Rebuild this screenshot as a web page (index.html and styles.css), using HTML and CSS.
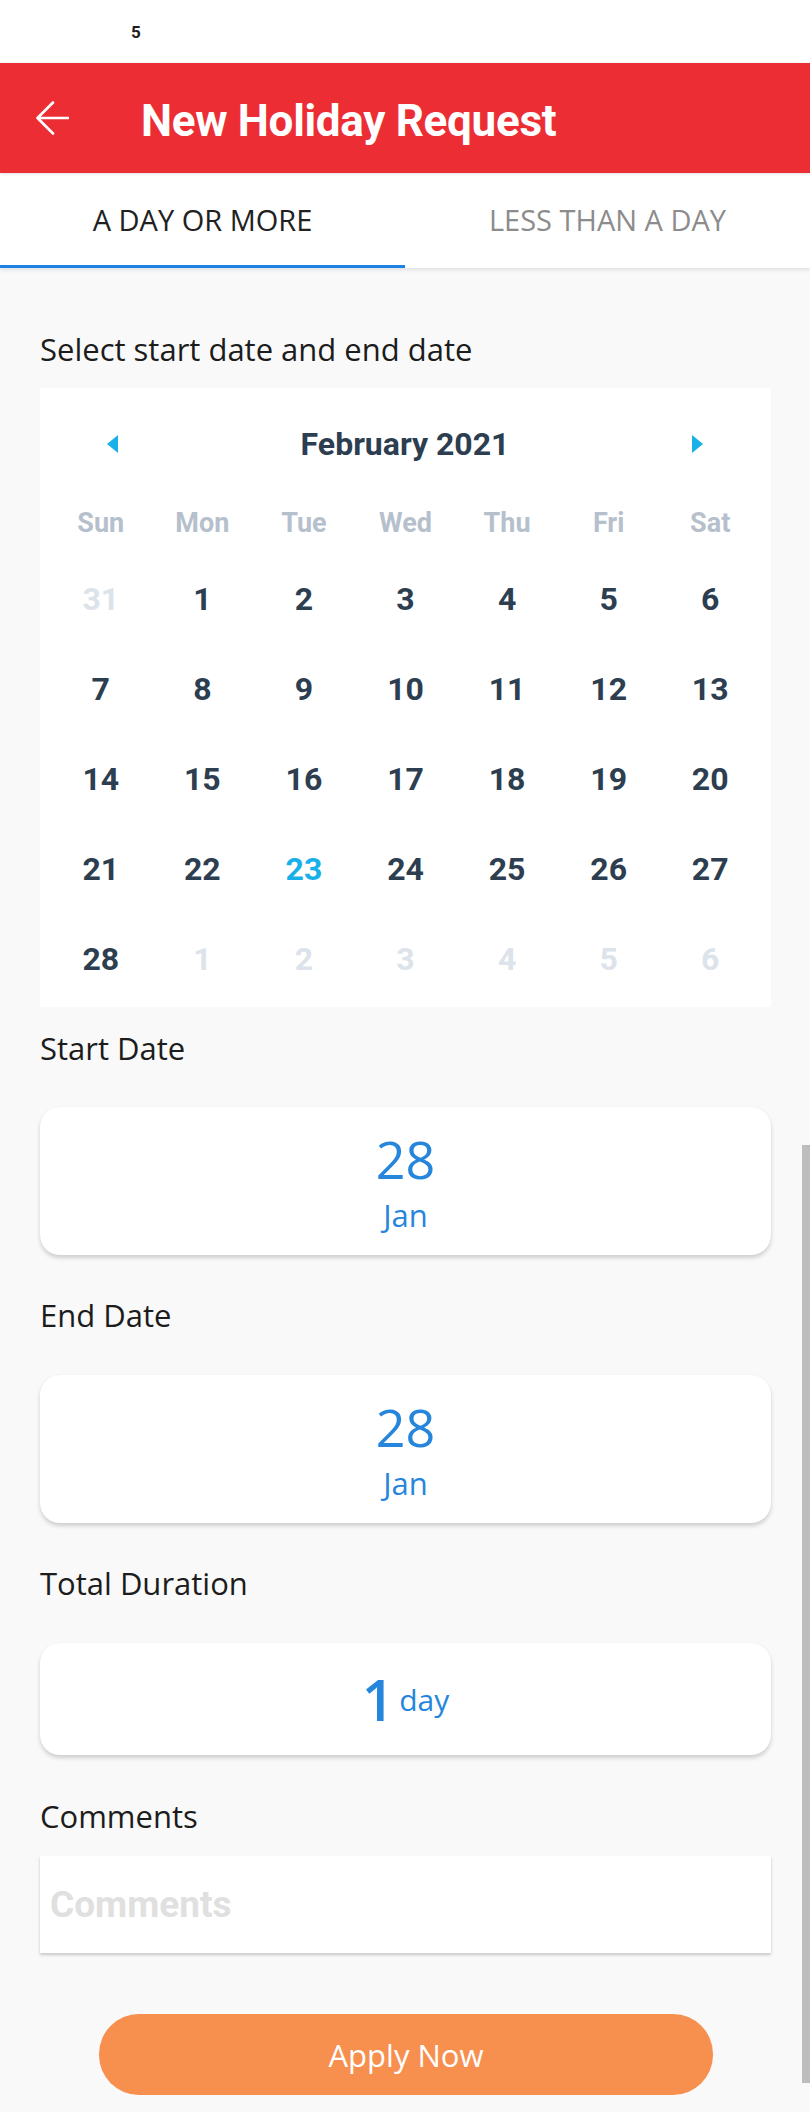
FILE: index.html
```html
<!DOCTYPE html>
<html lang="en">
<head>
<meta charset="utf-8">
<title>New Holiday Request</title>
<link rel="stylesheet" href="styles.css">
</head>
<body>
<div class="page">
  <div class="status"><span class="status-time">5</span></div>

  <header class="appbar">
    <svg class="back" width="34" height="34" viewBox="0 0 34 34" aria-hidden="true">
      <path d="M2.5 17 H33 M18 1.5 L2.5 17 L18 32.5" fill="none" stroke="#ffffff" stroke-width="2.6" stroke-linecap="round" stroke-linejoin="round"/>
    </svg>
    <h1 class="title">New Holiday Request</h1>
  </header>

  <nav class="tabs">
    <div class="tab tab-active">A DAY OR MORE</div>
    <div class="tab">LESS THAN A DAY</div>
  </nav>

  <main class="content">
    <div class="label label-first">Select start date and end date</div>

    <section class="calendar">
      <div class="cal-head">
        <span class="tri tri-left"></span>
        <span class="month">February 2021</span>
        <span class="tri tri-right"></span>
      </div>
      <div class="weekdays">
        <span>Sun</span><span>Mon</span><span>Tue</span><span>Wed</span><span>Thu</span><span>Fri</span><span>Sat</span>
      </div>
      <div class="days">
        <span class="muted">31</span><span>1</span><span>2</span><span>3</span><span>4</span><span>5</span><span>6</span>
        <span>7</span><span>8</span><span>9</span><span>10</span><span>11</span><span>12</span><span>13</span>
        <span>14</span><span>15</span><span>16</span><span>17</span><span>18</span><span>19</span><span>20</span>
        <span>21</span><span>22</span><span class="today">23</span><span>24</span><span>25</span><span>26</span><span>27</span>
        <span>28</span><span class="muted">1</span><span class="muted">2</span><span class="muted">3</span><span class="muted">4</span><span class="muted">5</span><span class="muted">6</span>
      </div>
    </section>

    <div class="label label-after-cal">Start Date</div>
    <div class="date-card">
      <div class="date-day">28</div>
      <div class="date-month">Jan</div>
    </div>

    <div class="label">End Date</div>
    <div class="date-card">
      <div class="date-day">28</div>
      <div class="date-month">Jan</div>
    </div>

    <div class="label">Total Duration</div>
    <div class="duration-card">
      <span class="dur-num">1</span><span class="dur-unit">day</span>
    </div>

    <div class="label label-comments">Comments</div>
    <div class="comments"><span class="placeholder">Comments</span></div>

    <div class="actions">
      <button class="apply" type="button">Apply Now</button>
    </div>
  </main>

  <div class="scrollbar"></div>
</div>
</body>
</html>
```
FILE: styles.css
```css
* { box-sizing: border-box; }

html, body {
  margin: 0;
  padding: 0;
  background: #f9f9f9;
}

body {
  font-family: "Open Sans", "Noto Sans", sans-serif;
  color: #222222;
}

.page {
  position: relative;
  width: 810px;
  min-height: 2112px;
  overflow: hidden;
}

/* status bar */
.status {
  height: 63px;
  background: #ffffff;
  display: flex;
  align-items: center;
  padding-left: 131px;
}
.status-time {
  font-family: Roboto, "Liberation Sans", sans-serif;
  font-weight: 700;
  font-size: 17px;
  color: #1c1c1c;
}

/* app bar */
.appbar {
  height: 110px;
  background: #ec2e34;
  display: flex;
  align-items: center;
  padding-left: 35px;
  position: relative;
  z-index: 2;
  box-shadow: 0 1px 3px rgba(0,0,0,0.12);
}
.back {
  display: block;
  flex: none;
}
.title {
  margin: 6px 0 0 72px;
  font-family: Roboto, "Liberation Sans", sans-serif;
  font-weight: 700;
  font-size: 44px;
  line-height: 44px;
  color: #ffffff;
  letter-spacing: -0.3px;
}

/* tabs */
.tabs {
  height: 95px;
  background: #ffffff;
  display: flex;
  position: relative;
  z-index: 1;
  box-shadow: 0 2px 4px rgba(0,0,0,0.10);
}
.tab {
  flex: 1;
  display: flex;
  align-items: center;
  justify-content: center;
  padding-top: 1px;
  font-size: 29px;
  color: #8c8c8c;
  border-bottom: 3px solid transparent;
}
.tab-active {
  color: #212121;
  border-bottom-color: #1e82e4;
}

/* content */
.content {
  padding: 0 39px 0 40px;
}

.label {
  height: 40px;
  line-height: 40px;
  font-size: 31px;
  color: #1c1c1c;
  margin: 40px 0 40px;
}
.label-first { margin-top: 61px; margin-bottom: 19px; }
.label-after-cal { margin-top: 21px; margin-bottom: 39px; }
.label-comments { margin-top: 41px; margin-bottom: 20px; }

/* calendar */
.calendar {
  background: #ffffff;
  padding: 0 10px 3px;
  font-family: Roboto, "Liberation Sans", sans-serif;
  font-weight: 700;
}
.cal-head {
  height: 112px;
  display: flex;
  align-items: center;
  justify-content: space-between;
  padding: 0 58px 0 57px;
}
.month {
  font-size: 32px;
  color: #2c3e50;
}
.tri {
  width: 0;
  height: 0;
  border-top: 9.5px solid transparent;
  border-bottom: 9.5px solid transparent;
}
.tri-left { border-right: 11px solid #1ab0e8; }
.tri-right { border-left: 11px solid #1ab0e8; }

.weekdays {
  height: 46px;
  display: grid;
  grid-template-columns: repeat(7, 1fr);
  align-items: center;
  justify-items: center;
  font-size: 27px;
  color: #b6c0cd;
}
.days {
  margin-top: 8px;
  display: grid;
  grid-template-columns: repeat(7, 1fr);
  grid-auto-rows: 90px;
  align-items: center;
  justify-items: center;
  font-size: 32px;
  color: #2c3e50;
}
.days .muted { color: #dce3ea; }
.days .today { color: #18b0e8; }

/* cards */
.date-card {
  height: 148px;
  background: #ffffff;
  border-radius: 20px;
  box-shadow: 0 3px 4px rgba(0,0,0,0.17), 0 0 1px rgba(0,0,0,0.06);
  display: flex;
  flex-direction: column;
  align-items: center;
  padding-top: 24px;
  color: #2686dc;
}
.date-day {
  font-size: 52px;
  font-weight: 500;
  line-height: 56px;
}
.date-month {
  margin-top: 8px;
  font-size: 31px;
  font-weight: 500;
  line-height: 40px;
}

.duration-card {
  height: 112px;
  background: #ffffff;
  border-radius: 20px;
  box-shadow: 0 3px 4px rgba(0,0,0,0.17), 0 0 1px rgba(0,0,0,0.06);
  display: flex;
  align-items: center;
  justify-content: center;
  color: #2686dc;
}
.dur-num {
  font-size: 57px;
  font-weight: 600;
  line-height: 57px;
}
.dur-unit {
  font-size: 30px;
  font-weight: 500;
  line-height: 30px;
  margin-left: 5px;
  margin-top: 2px;
}

/* comments */
.comments {
  height: 97px;
  background: #ffffff;
  box-shadow: 0 2px 3px rgba(0,0,0,0.2);
  display: flex;
  align-items: center;
  padding-left: 10px;
}
.placeholder {
  font-family: Roboto, "Liberation Sans", sans-serif;
  font-weight: 700;
  font-size: 37px;
  color: #e0e0e0;
}

/* button */
.actions {
  margin-top: 61px;
  display: flex;
  justify-content: center;
  padding-left: 1px;
}
.apply {
  width: 614px;
  height: 81px;
  border: none;
  border-radius: 40px;
  background: #f78f4f;
  color: #ffffff;
  font-family: "Open Sans", "Noto Sans", sans-serif;
  font-size: 31px;
  padding: 0;
}

/* scroll indicator */
.scrollbar {
  position: absolute;
  left: 802px;
  top: 1145px;
  width: 8px;
  height: 938px;
  background: #bdbdbd;
}
```
